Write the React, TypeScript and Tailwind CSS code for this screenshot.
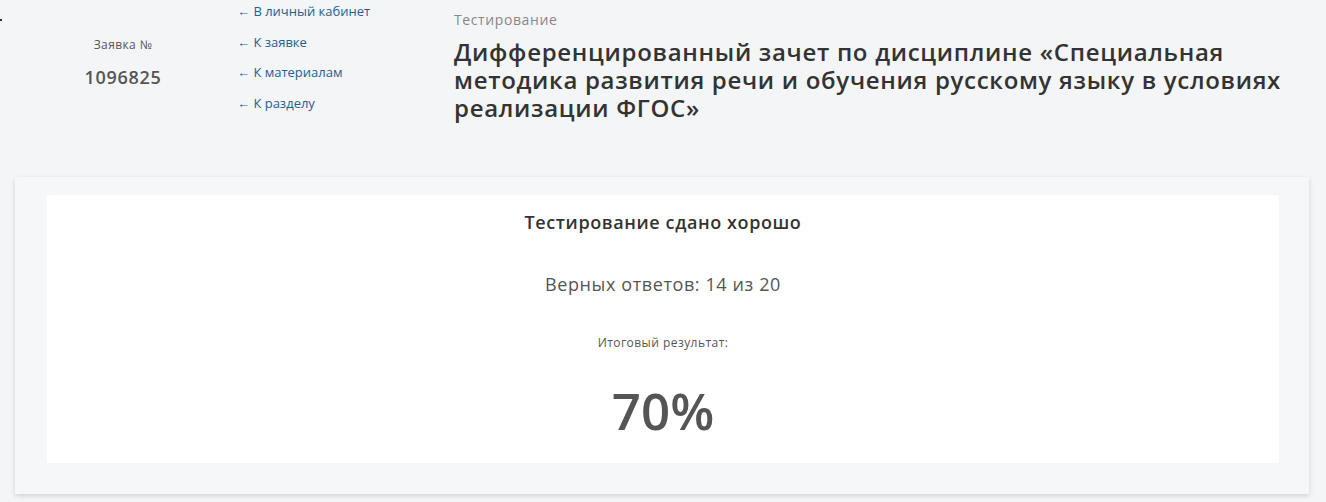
export default function App() {
  const links = ['В личный кабинет', 'К заявке', 'К материалам', 'К разделу'];

  return (
    <div className="relative min-h-screen bg-[#f4f5f7] font-['Open_Sans',sans-serif] text-[#333]">
      <span className="absolute left-0 top-[19px] h-[2px] w-[2px] bg-[#333]" />

      {/* Header */}
      <div className="flex">
        <div className="ml-[15px] w-[216px] pt-[36px] text-center">
          <div className="text-[12px] leading-[18px] tracking-[0.4px] text-[#555]">Заявка №</div>
          <div className="mt-[11px] text-[18px] font-semibold leading-[24px] tracking-[0.7px] text-[#555]">1096825</div>
        </div>

        <div className="ml-[6px] flex w-[217px] flex-col gap-[12.5px] pt-[2px]">
          {links.map((l) => (
            <a key={l} href="#" className="text-[13px] leading-[18px] text-[#1f5f8f]">
              ← {l}
            </a>
          ))}
        </div>

        <div className="w-[850px] pt-[10px]">
          <div className="text-[14px] leading-[20px] tracking-[0.6px] text-[#888]">Тестирование</div>
          <h1 className="mt-[8px] text-[24px] font-semibold leading-[28px] tracking-[0.7px] text-[#333]">
            Дифференцированный зачет по дисциплине «Специальная методика развития речи и обучения русскому языку в условиях реализации ФГОС»
          </h1>
        </div>
      </div>

      {/* Result card */}
      <div className="mx-[15px] mt-[55px] w-[1294px] bg-[#f6f7f9] pb-[31px] pl-[32px] pr-[30px] pt-[18px] shadow-[0_2px_5px_rgba(0,0,0,0.14)]">
        <div className="flex flex-col items-center rounded-[2px] bg-white pb-[23px] pt-[15px] text-center">
          <div className="text-[18px] font-semibold leading-[24px] tracking-[0.6px] text-[#333]">Тестирование сдано хорошо</div>
          <div className="mt-[38px] text-[18px] leading-[24px] tracking-[0.6px] text-[#555]">Верных ответов: 14 из 20</div>
          <div className="mt-[39px] text-[12px] leading-[16px] tracking-[0.45px] text-[#555]">Итоговый результат:</div>
          <div className="mt-[29px] text-[51px] font-semibold leading-[60px] text-[#555]">70%</div>
        </div>
      </div>
    </div>
  );
}
